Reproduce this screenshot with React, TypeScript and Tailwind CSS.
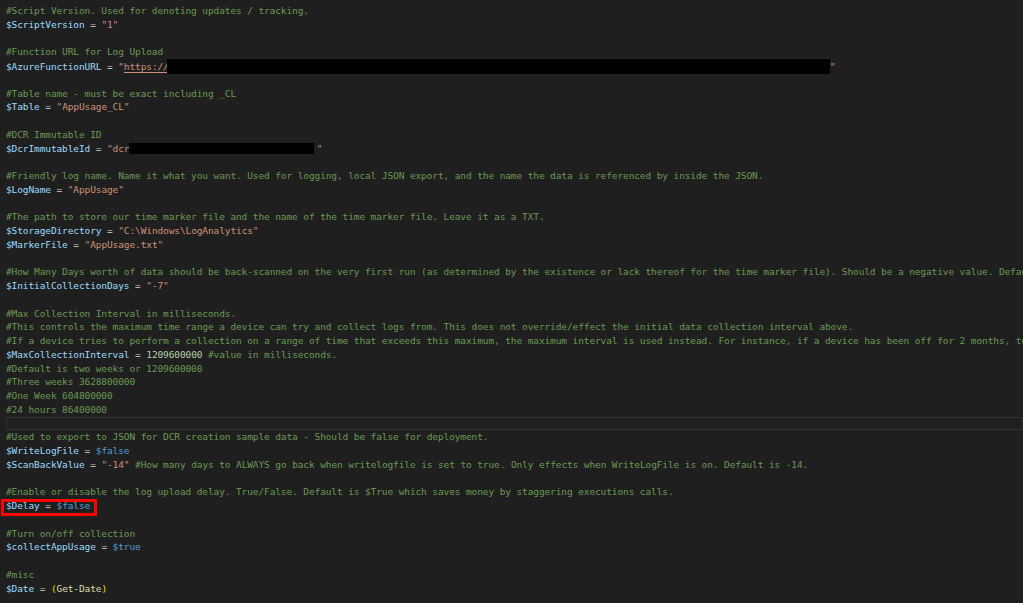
type Tok = { t: string; c: string; u?: boolean };

const C = {
  cm: "text-[#6a9955]",
  v: "text-[#9cdcfe]",
  op: "text-[#d4d4d4]",
  s: "text-[#ce9178]",
  k: "text-[#569cd6]",
  n: "text-[#b5cea8]",
  p: "text-[#ffd700]",
  f: "text-[#dcdcaa]",
};

const cm = (t: string): Tok[] => [{ t, c: C.cm }];
const assign = (name: string, rest: Tok[]): Tok[] => [
  { t: name, c: C.v },
  { t: " = ", c: C.op },
  ...rest,
];

type Line = Tok[] | "azure" | "dcr" | "delay" | "current";

const lines: Line[] = [
  cm("#Script Version. Used for denoting updates / tracking."),
  assign("$ScriptVersion", [{ t: '"1"', c: C.s }]),
  [],
  cm("#Function URL for Log Upload"),
  "azure",
  [],
  cm("#Table name - must be exact including _CL"),
  assign("$Table", [{ t: '"AppUsage_CL"', c: C.s }]),
  [],
  cm("#DCR Immutable ID"),
  "dcr",
  [],
  cm(
    "#Friendly log name. Name it what you want. Used for logging, local JSON export, and the name the data is referenced by inside the JSON."
  ),
  assign("$LogName", [{ t: '"AppUsage"', c: C.s }]),
  [],
  cm("#The path to store our time marker file and the name of the time marker file. Leave it as a TXT."),
  assign("$StorageDirectory", [{ t: '"C:\\Windows\\LogAnalytics"', c: C.s }]),
  assign("$MarkerFile", [{ t: '"AppUsage.txt"', c: C.s }]),
  [],
  cm(
    "#How Many Days worth of data should be back-scanned on the very first run (as determined by the existence or lack thereof for the time marker file). Should be a negative value. Default is -7."
  ),
  assign("$InitialCollectionDays", [{ t: '"-7"', c: C.s }]),
  [],
  cm("#Max Collection Interval in milliseconds."),
  cm(
    "#This controls the maximum time range a device can try and collect logs from. This does not override/effect the initial data collection interval above."
  ),
  cm(
    "#If a device tries to perform a collection on a range of time that exceeds this maximum, the maximum interval is used instead. For instance, if a device has been off for 2 months, turning it on"
  ),
  assign("$MaxCollectionInterval", [
    { t: "1209600000", c: C.n },
    { t: " #value in milliseconds.", c: C.cm },
  ]),
  cm("#Default is two weeks or 1209600000"),
  cm("#Three weeks 3628800000"),
  cm("#One Week 604800000"),
  cm("#24 hours 86400000"),
  "current",
  cm("#Used to export to JSON for DCR creation sample data - Should be false for deployment."),
  assign("$WriteLogFile", [{ t: "$false", c: C.k }]),
  assign("$ScanBackValue", [
    { t: '"-14"', c: C.s },
    {
      t: " #How many days to ALWAYS go back when writelogfile is set to true. Only effects when WriteLogFile is on. Default is -14.",
      c: C.cm,
    },
  ]),
  [],
  cm(
    "#Enable or disable the log upload delay. True/False. Default is $True which saves money by staggering executions calls."
  ),
  "delay",
  [],
  cm("#Turn on/off collection"),
  assign("$collectAppUsage", [{ t: "$true", c: C.k }]),
  [],
  cm("#misc"),
  assign("$Date", [
    { t: "(", c: C.p },
    { t: "Get-Date", c: C.f },
    { t: ")", c: C.p },
  ]),
];

const Toks = ({ toks }: { toks: Tok[] }) => (
  <>
    {toks.map((k, i) => (
      <span key={i} className={k.c}>
        {k.t}
      </span>
    ))}
  </>
);

const renderLine = (l: Line) => {
  if (l === "azure") {
    return (
      <>
        <span className={C.v}>$AzureFunctionURL</span>
        <span className={C.op}> = </span>
        <span className={C.s}>"</span>
        <span className={`${C.s} underline decoration-[#ce9178] underline-offset-2`}>https://</span>
        <span className="inline-block h-[15px] w-[663px] -ml-[2px] bg-black align-[-4px]" />
        <span className={C.s}>"</span>
      </>
    );
  }
  if (l === "dcr") {
    return (
      <>
        <span className={C.v}>$DcrImmutableId</span>
        <span className={C.op}> = </span>
        <span className={C.s}>"dcr</span>
        <span className="inline-block h-[11px] w-[185px] mr-[2px] bg-black align-[-2px]" />
        <span className={C.s}>"</span>
      </>
    );
  }
  if (l === "delay") {
    return (
      <span className="relative">
        <span className="absolute -left-[5px] -right-[7px] -top-[1px] -bottom-[5px] border-[3px] border-[#ff0000]" />
        <span className={C.v}>$Delay</span>
        <span className={C.op}> = </span>
        <span className={C.k}>$false</span>
      </span>
    );
  }
  if (l === "current") return null;
  return <Toks toks={l} />;
};

export default function App() {
  return (
    <div className="w-[1023px] h-[603px] overflow-hidden bg-[#1f1f1f] pt-[4px]">
      <div
        className="text-[9.5px] tracking-[-0.11px] whitespace-pre"
        style={{ fontFamily: '"DejaVu Sans Mono", "Liberation Mono", monospace' }}
      >
        {lines.map((l, i) => (
          <div
            key={i}
            className={
              l === "current"
                ? "h-[13.76px] ml-[6px] border border-[#303030]"
                : "h-[13.76px] leading-[13.76px] pl-[6px]"
            }
          >
            {renderLine(l)}
          </div>
        ))}
      </div>
    </div>
  );
}
